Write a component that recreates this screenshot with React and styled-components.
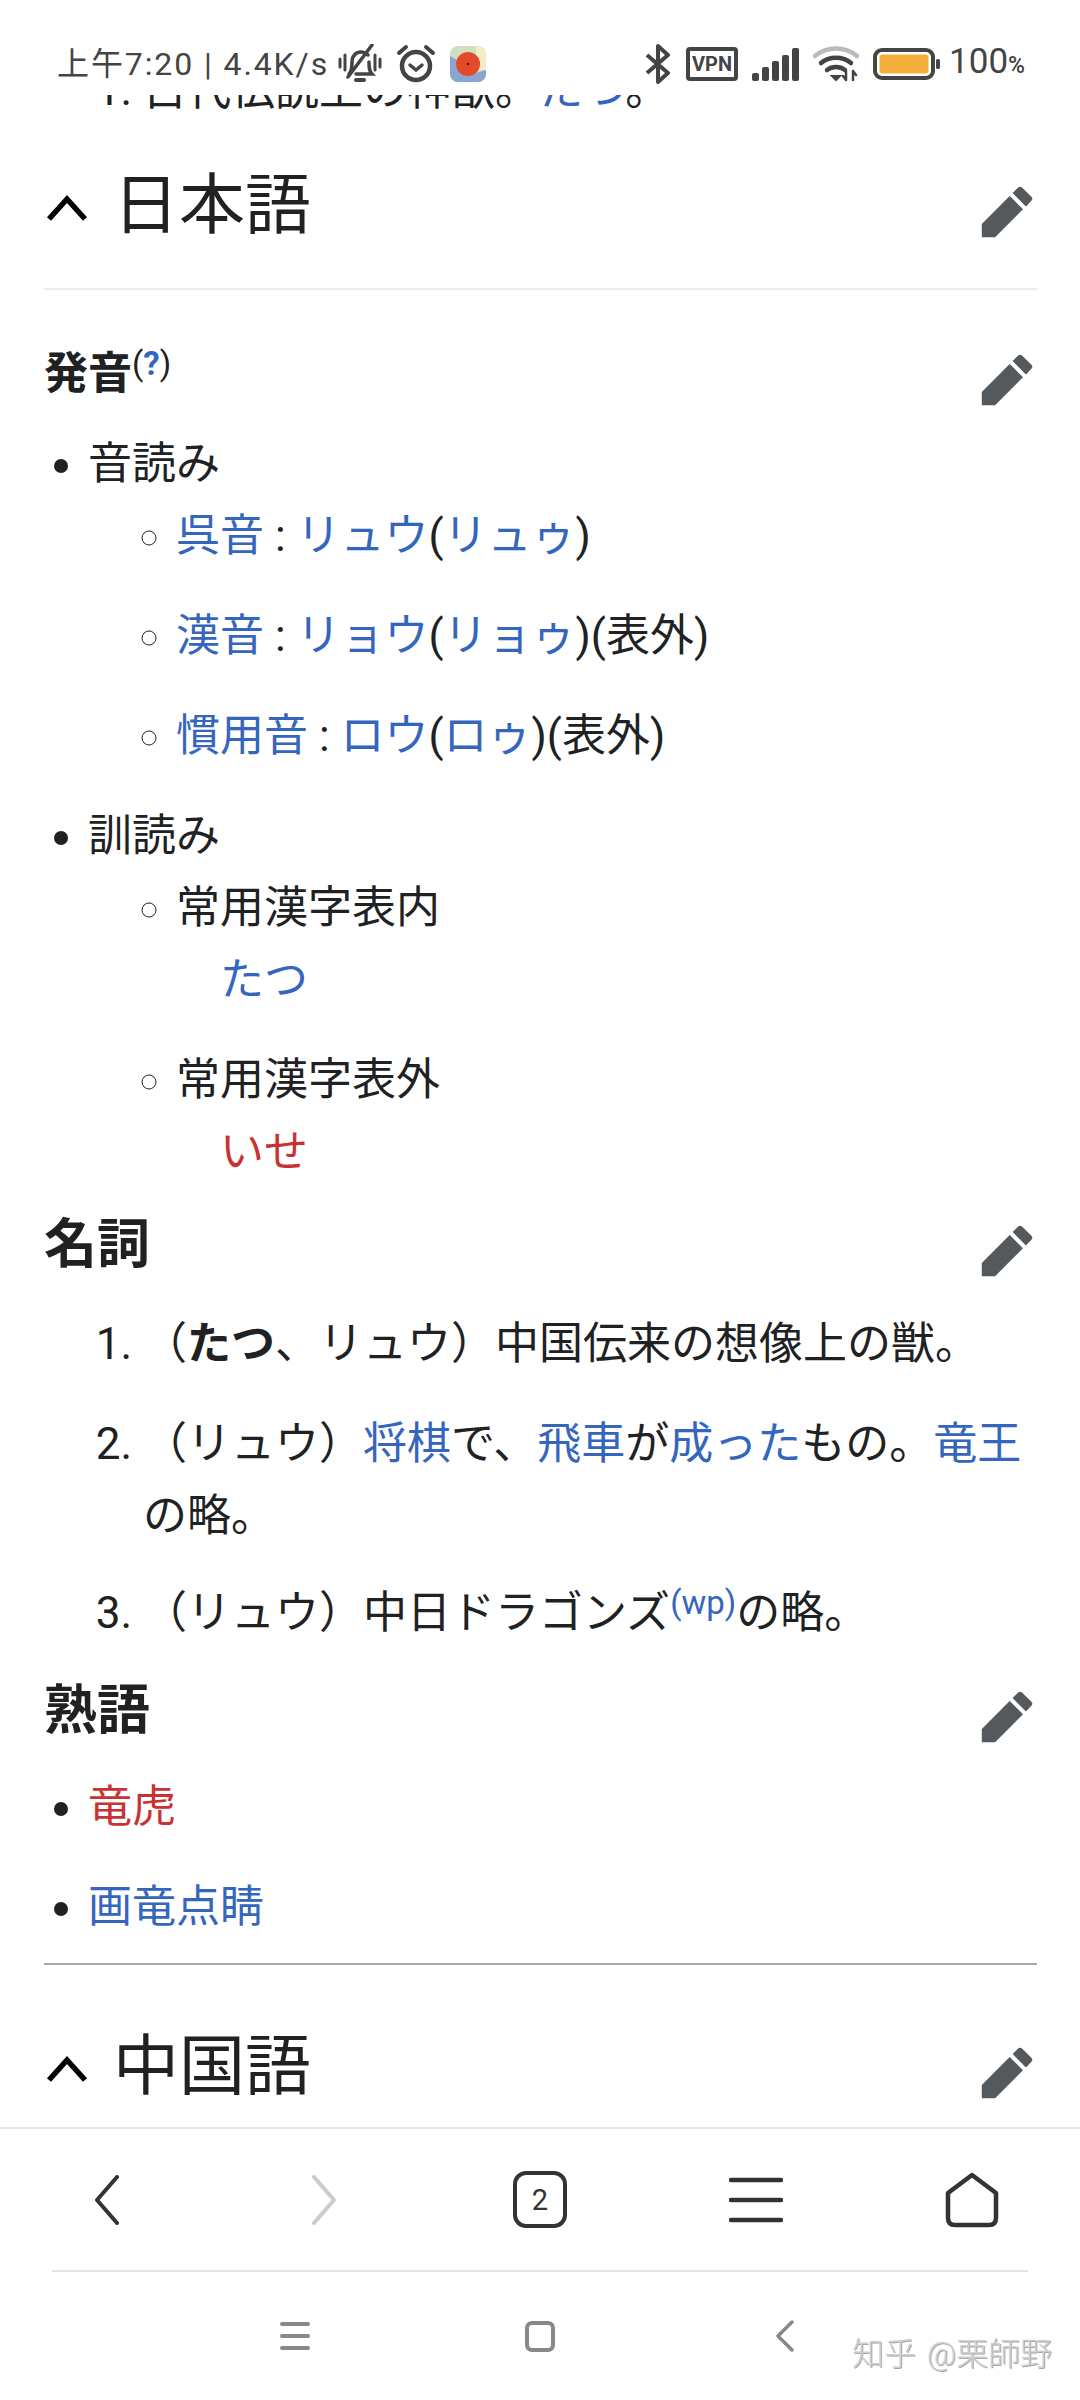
import React from 'react';
import styled, { createGlobalStyle } from 'styled-components';

const GlobalStyle = createGlobalStyle`
  html, body {
    margin: 0;
    padding: 0;
    background: #fff;
  }
  body {
    font-family: Roboto, "Noto Sans CJK JP", sans-serif;
    color: #202122;
  }
`;

const Page = styled.div`
  width: 1080px;
  height: 2400px;
  display: flex;
  flex-direction: column;
  overflow: hidden;
  position: relative;
  background: #fff;
`;

const StatusBar = styled.header`
  flex: 0 0 95px;
  display: flex;
  align-items: flex-start;
  justify-content: space-between;
  padding: 44px 55px 0 57px;
  box-sizing: border-box;
  color: #444;
  background: #fff;
  position: relative;
  z-index: 1;
`;

const StatusGroup = styled.div`
  display: flex;
  align-items: center;
  height: 40px;
`;

const StatusText = styled.span`
  font-size: 32px;
  line-height: 40px;
  letter-spacing: 1.9px;
  white-space: nowrap;
  margin-right: 9px;
`;

const StatusIcon = styled.svg`
  display: block;
  flex: none;
  margin-left: ${({ $gap }) => $gap || 0}px;
`;

const VpnBadge = styled.span`
  box-sizing: border-box;
  width: 52px;
  height: 34px;
  margin-left: 15px;
  border: 4px solid #444;
  border-radius: 4px;
  font-size: 20px;
  font-weight: 700;
  line-height: 26px;
  text-align: center;
`;

const Percent = styled.span`
  margin-left: 8px;
  font-size: 35px;
  line-height: 40px;
  white-space: nowrap;
  small {
    font-size: 23px;
    font-weight: 500;
  }
`;

const Content = styled.main`
  flex: 1 1 0;
  min-height: 0;
  overflow: hidden;
  padding: 0 43px 0 44px;
  font-size: 44px;
  line-height: 72px;
`;

const ClippedList = styled.ol`
  margin: -41px 0 0;
  padding-left: 99px;
`;

const H2Row = styled.div`
  display: flex;
  align-items: center;
  padding: ${({ $top }) => $top}px 0 ${({ $bottom }) => $bottom}px;
  border-bottom: ${({ $line }) => ($line ? '2px solid #eaecf0' : 'none')};
`;

const H2Title = styled.h2`
  margin: 0 0 0 25px;
  font-size: 66px;
  line-height: 90px;
  font-weight: 400;
`;

const H3Row = styled.div`
  display: flex;
  align-items: center;
  margin: ${({ $top }) => $top}px 0 ${({ $bottom }) => $bottom}px;
`;

const H3Title = styled.h3`
  margin: 0;
  font-size: ${({ $size }) => $size}px;
  line-height: 72px;
  font-weight: 700;
`;

const Sup = styled.sup`
  font-size: 33px;
  font-weight: 400;
  line-height: 0;
  vertical-align: 0.42em;
`;

const HelpMark = styled.a`
  color: #3566bd;
  font-weight: 700;
`;

const Chevron = styled.svg`
  flex: none;
  display: block;
  margin: 4px 0 0 2px;
`;

const Pencil = styled.svg`
  flex: none;
  display: block;
  margin: 11px 2px 0 auto;
  fill: #54595d;
`;

const Bullets = styled.ul`
  margin: 0;
  padding-left: 44px;
  list-style: disc;
`;

const Circles = styled.ul`
  margin: 0;
  padding-left: 88px;
  list-style: circle;
`;

const Numbers = styled.ol`
  margin: 0;
  padding-left: 99px;
`;

const Item = styled.li`
  margin-bottom: ${({ $gap }) => ($gap === undefined ? 28 : $gap)}px;
`;

const Reading = styled.div`
  margin-left: 44px;
`;

const Link = styled.a`
  color: ${({ $red }) => ($red ? '#c93232' : '#3566bd')};
  text-decoration: none;
`;

const Rule = styled.hr`
  margin: 0;
  border: 0;
  border-top: 2px solid #a2a9b1;
`;

const BottomBar = styled.nav`
  flex: 0 0 143px;
  display: grid;
  grid-template-columns: repeat(5, 1fr);
  align-items: center;
  justify-items: center;
  border-top: 2px solid #e6e6e6;
  box-sizing: border-box;
  background: #fff;
`;

const NavArrow = styled.svg`
  display: block;
  margin-left: ${({ $shift }) => $shift || 0}px;
`;

const TabCount = styled.span`
  box-sizing: border-box;
  width: 54px;
  height: 57px;
  border: 4px solid #333;
  border-radius: 13px;
  display: flex;
  align-items: center;
  justify-content: center;
  font-size: 29px;
  font-weight: 400;
  color: #333;
`;

const NavDivider = styled.div`
  flex: none;
  height: 2px;
  margin: 0 52px;
  background: #e6e6e6;
`;

const SystemBar = styled.nav`
  flex: 0 0 128px;
  display: grid;
  grid-template-columns: repeat(3, 245px);
  justify-content: center;
  align-items: center;
  justify-items: center;
`;

const SystemSquare = styled.span`
  box-sizing: border-box;
  width: 30px;
  height: 31px;
  border: 4px solid #888;
  border-radius: 7px;
`;

const Watermark = styled.span`
  position: absolute;
  right: 28px;
  bottom: 28px;
  font-size: 32px;
  font-weight: 300;
  line-height: 36px;
  word-spacing: 3px;
  color: #d0d0d0;
  text-shadow: 1px 1px 0 #a8a8a8;
  white-space: nowrap;
`;

const PencilIcon = () => (
  <Pencil width="56" height="56" viewBox="0 0 20 20">
    <path d="M16.77 8l1.94-2a1 1 0 0 0 0-1.41l-3.34-3.3a1 1 0 0 0-1.41 0L12 3.23zm-5.81-3.71L1 14.25V19h4.75l9.96-9.96z" />
  </Pencil>
);

const ChevronIcon = () => (
  <Chevron width="42" height="28" viewBox="0 0 42 28">
    <path d="M3 25 L21 5 L39 25" fill="none" stroke="#000" strokeWidth="5.5" />
  </Chevron>
);

const H2Heading = ({ title, top, bottom = 0, line }) => (
  <H2Row $top={top} $bottom={bottom} $line={line}>
    <ChevronIcon />
    <H2Title>{title}</H2Title>
    <PencilIcon />
  </H2Row>
);

const H3Heading = ({ size = 53, top, bottom, children }) => (
  <H3Row $top={top} $bottom={bottom}>
    <H3Title $size={size}>{children}</H3Title>
    <PencilIcon />
  </H3Row>
);

const App = () => (
  <Page>
    <GlobalStyle />
    <StatusBar>
      <StatusGroup>
        <StatusText>上午7:20 | 4.4K/s</StatusText>
        <StatusIcon width="44" height="40" viewBox="0 0 44 40" fill="none" stroke="#444" strokeLinecap="round">
          <path d="M2 15v8M7 11v15M37 11v15M42 15v8" strokeWidth="3" />
          <path d="M11 30c3-3 3-7 3-12 0-6 4-10 9-10 3 0 5 1 7 3M31 18c0 5 0 9 3 12H18" strokeWidth="3.5" />
          <path d="M34 1 10 33" strokeWidth="3.5" />
          <path d="M18 36h8" strokeWidth="4" />
        </StatusIcon>
        <StatusIcon $gap={14} width="40" height="40" viewBox="0 0 40 40" fill="none" stroke="#444" strokeLinecap="round">
          <circle cx="20" cy="22" r="14" strokeWidth="4.5" />
          <path d="M14 21l6 5 6-5" strokeWidth="3.5" />
          <path d="M3 9l7-6M37 9l-7-6" strokeWidth="4" />
        </StatusIcon>
        <StatusIcon $gap={14} width="36" height="36" viewBox="0 0 36 36">
          <rect width="36" height="36" rx="8" fill="#cfe0c0" />
          <path d="M26 0h2a8 8 0 0 1 8 8v16H26z" fill="#f3ecc6" />
          <path d="M0 10l14 8 8 10 14-4v4a8 8 0 0 1-8 8H8a8 8 0 0 1-8-8z" fill="#8ba4d0" />
          <circle cx="18" cy="18" r="12" fill="#e34a2c" />
          <circle cx="18" cy="18" r="1.2" fill="#5a1a10" />
        </StatusIcon>
      </StatusGroup>
      <StatusGroup>
        <StatusIcon width="26" height="40" viewBox="0 0 26 40" fill="none" stroke="#444" strokeWidth="4" strokeLinejoin="round">
          <path d="M2 11l21 18-10 9V2l10 9L2 29" />
        </StatusIcon>
        <VpnBadge>VPN</VpnBadge>
        <StatusIcon $gap={14} width="48" height="33" viewBox="0 0 48 33" fill="#444">
          <rect x="0" y="25" width="7" height="8" rx="2" />
          <rect x="10" y="19" width="7" height="14" rx="2" />
          <rect x="20" y="13" width="7" height="20" rx="2" />
          <rect x="30" y="7" width="7" height="26" rx="2" />
          <rect x="40" y="0" width="7" height="33" rx="2" />
        </StatusIcon>
        <StatusIcon $gap={13} width="46" height="36" viewBox="0 0 46 36" fill="none" strokeLinecap="round">
          <path d="M2 10C14 0 32 0 44 10" stroke="#bbb" strokeWidth="4.5" />
          <path d="M8 17C16 10 30 10 38 17" stroke="#444" strokeWidth="4.5" />
          <path d="M14 24C19 20 27 20 32 24" stroke="#444" strokeWidth="4.5" />
          <path d="M19 30l4 4 4-4z" fill="#444" stroke="#444" strokeWidth="2" />
          <path d="M33 25v9M30 30l3 4M40 34v-9M40 25l3 4" stroke="#444" strokeWidth="2.5" />
        </StatusIcon>
        <StatusIcon $gap={14} width="68" height="32" viewBox="0 0 68 32">
          <rect x="2" y="2" width="58" height="28" rx="7" fill="#fff" stroke="#444" strokeWidth="4" />
          <rect x="6.5" y="6.5" width="49" height="19" rx="3" fill="#f5ad3b" />
          <rect x="63" y="11" width="4" height="10" rx="1.5" fill="#444" />
        </StatusIcon>
        <Percent>100<small>%</small></Percent>
      </StatusGroup>
    </StatusBar>

    <Content>
      <ClippedList>
        <li>古代伝説上の神獣。<Link>たつ</Link>。</li>
      </ClippedList>

      <H2Heading title="日本語" top={35} bottom={37} line />

      <H3Heading size={44} top={48} bottom={18}>
        発音<Sup>(<HelpMark>?</HelpMark>)</Sup>
      </H3Heading>

      <Bullets>
        <Item>
          音読み
          <Circles>
            <Item><Link>呉音</Link> : <Link>リュウ</Link>(<Link>リュゥ</Link>)</Item>
            <Item><Link>漢音</Link> : <Link>リョウ</Link>(<Link>リョゥ</Link>)(表外)</Item>
            <Item $gap={0}><Link>慣用音</Link> : <Link>ロウ</Link>(<Link>ロゥ</Link>)(表外)</Item>
          </Circles>
        </Item>
        <Item $gap={0}>
          訓読み
          <Circles>
            <Item>
              常用漢字表内
              <Reading><Link>たつ</Link></Reading>
            </Item>
            <Item $gap={0}>
              常用漢字表外
              <Reading><Link $red>いせ</Link></Reading>
            </Item>
          </Circles>
        </Item>
      </Bullets>

      <H3Heading top={21} bottom={27}>名詞</H3Heading>

      <Numbers>
        <Item>（<b>たつ</b>、リュウ）中国伝来の想像上の獣。</Item>
        <Item $gap={25}>（リュウ）<Link>将棋</Link>で、<Link>飛車</Link>が<Link>成った</Link>もの。<Link>竜王</Link>の略。</Item>
        <Item $gap={0}>（リュウ）中日ドラゴンズ<Sup><Link>(wp)</Link></Sup>の略。</Item>
      </Numbers>

      <H3Heading top={26} bottom={24}>熟語</H3Heading>

      <Bullets>
        <Item><Link $red>竜虎</Link></Item>
        <Item $gap={20}><Link>画竜点睛</Link></Item>
      </Bullets>

      <Rule />

      <H2Heading title="中国語" top={57} />
    </Content>

    <BottomBar>
      <NavArrow $shift={-3} width="30" height="50" viewBox="0 0 30 50" fill="none" stroke="#333" strokeWidth="4" strokeLinecap="round" strokeLinejoin="round">
        <path d="M25 2 L5 25 L25 48" />
      </NavArrow>
      <NavArrow width="30" height="50" viewBox="0 0 30 50" fill="none" stroke="#ccc" strokeWidth="4" strokeLinecap="round" strokeLinejoin="round">
        <path d="M5 2 L25 25 L5 48" />
      </NavArrow>
      <TabCount>2</TabCount>
      <svg width="54" height="46" viewBox="0 0 54 46" fill="none" stroke="#333" strokeWidth="4.5" strokeLinecap="round">
        <path d="M2 3h50M2 23h50M2 43h50" />
      </svg>
      <svg width="54" height="56" viewBox="0 0 54 56" fill="none" stroke="#333" strokeWidth="4.5" strokeLinejoin="round">
        <path d="M27 3 L51 21 V46 Q51 53 44 53 H10 Q3 53 3 46 V21 Z" />
      </svg>
    </BottomBar>

    <NavDivider />

    <SystemBar>
      <svg width="30" height="28" viewBox="0 0 30 28" stroke="#888" strokeWidth="4" strokeLinecap="round">
        <path d="M2 2h26M2 14h26M2 26h26" />
      </svg>
      <SystemSquare />
      <svg width="20" height="32" viewBox="0 0 20 32" fill="none" stroke="#888" strokeWidth="3.5" strokeLinecap="round" strokeLinejoin="round">
        <path d="M17 2 L3 16 L17 30" />
      </svg>
    </SystemBar>

    <Watermark>知乎 @栗師野</Watermark>
  </Page>
);

export default App;
